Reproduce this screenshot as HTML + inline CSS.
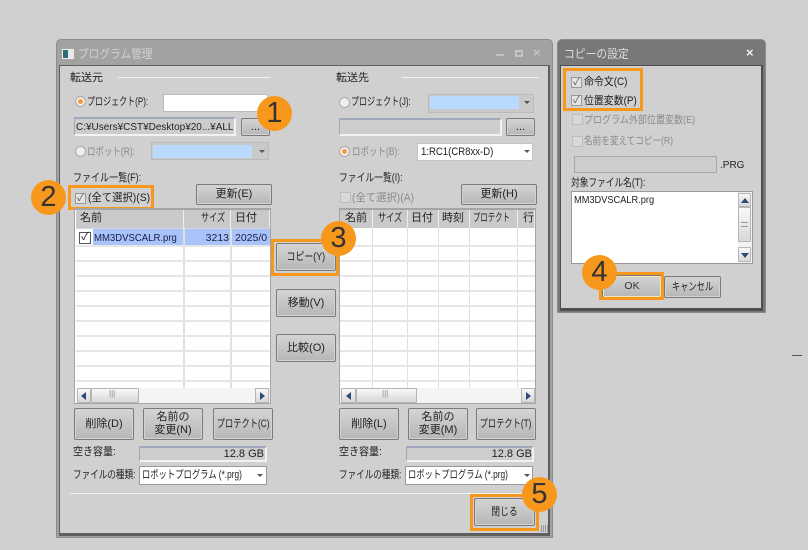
<!DOCTYPE html>
<html><head><meta charset="utf-8"><style>
html,body{margin:0;padding:0;width:808px;height:550px;overflow:hidden;background:#d0d0d0}
body{position:relative;font-family:"Liberation Sans","Noto Sans CJK JP",sans-serif;font-size:11px;color:#222}
div{position:absolute;box-sizing:border-box}
#w{left:0;top:0;width:808px;height:550px;filter:blur(.3px)}
.t{white-space:nowrap;line-height:14px;height:14px;transform-origin:left center}
.g{color:#8a8a8a}
.b{background:linear-gradient(#d4d4d4,#b6b6b6);border:1px solid #7b7b7b;border-radius:2px;text-align:center;display:flex;align-items:center;justify-content:center;line-height:13px;box-shadow:inset 0 0 0 1px #d2d2d2;white-space:nowrap}
.b span{display:inline-block}
.f{background:#cdcdcd;border:1px solid;border-color:#a2a8bb #f2f2f2 #f2f2f2 #a2a8bb;border-width:2px 2px 2px 1px}
.c{background:#fff;border:1px solid #aaa}
.cd{background:#c9c9c9;border:1px solid #bbb}
.blue{background:#b9d9ff}
.ar{width:0;height:0;border-left:3px solid transparent;border-right:3px solid transparent;border-top:3px solid #555}
.r{width:11px;height:11px;border-radius:50%;background:#eee;border:1px solid #aaa}
.r.on{background:#f59a3c;box-shadow:inset 0 0 0 2px #f1f1f1}
.k{width:11px;height:11px;background:#e4e4e4;border:1px solid #999;color:#555;font-size:10px;line-height:9px;text-align:center}
.k.off{background:#d8d8d8;border-color:#bdbdbd}
.o{border:3px solid #f7981d}
.n{width:35px;height:35px;border-radius:50%;background:#f7981d;color:#333;font-size:29px;line-height:35px;text-align:center}
.hl{background:#e6e6e6;height:2px}
.vl{background:#e0e0e0;width:1px}
.th{background:#c9c9c9;border-right:1px solid #eee;height:18px;line-height:17px;top:210px;overflow:hidden}
.sb{background:#f4f4f4;height:15px;top:388px}
.sq{background:linear-gradient(#f8f8f8,#d8d8d8);border:1px solid #b5b5b5;top:388px;height:15px;border-radius:1px}
.l{width:0;height:0;border-top:4px solid transparent;border-bottom:4px solid transparent;border-right:5px solid #2d4a78;top:392px}
.rr{width:0;height:0;border-top:4px solid transparent;border-bottom:4px solid transparent;border-left:5px solid #2d4a78;top:392px}
</style></head><body><div id="w">

<!-- main window -->
<div style="left:56px;top:39px;width:497px;height:499px;background:#a2a2a2;border:1px solid #8c8c8c;border-radius:5px 5px 0 0"></div>
<div style="left:59px;top:65px;width:491px;height:471px;background:#d0d0d0;border:1px solid #5e5e5e;border-bottom-width:3px;border-right-width:2px"></div>
<div style="left:62px;top:49px;width:12px;height:10px;background:linear-gradient(90deg,#2c6e78 50%,#e8e8e8 50%);border:1px solid #eee"></div>
<div class="t" style="left:78px;top:46px;font-size:12px;color:#d2d2d2;line-height:16px;height:16px;transform:scaleX(.89)">プログラム管理</div>
<div style="left:496px;top:54px;width:8px;height:2px;background:#c4c4c4"></div>
<div style="left:515px;top:50px;width:8px;height:7px;border:2px solid #c4c4c4"></div>
<div class="t" style="left:533px;top:46px;font-size:13px;color:#c4c4c4;font-weight:bold">×</div>

<!-- left -->
<div class="t" style="left:70px;top:71px">転送元</div>
<div style="left:118px;top:77px;width:152px;height:1px;background:#f2f2f2"></div>
<div class="r on" style="left:75px;top:96px"></div>
<div class="t" style="left:87px;top:95px;transform:scaleX(.73)">プロジェクト(P):</div>
<div class="c" style="left:163px;top:94px;width:105px;height:18px;border-color:#bbb"></div>
<div class="f" style="left:74px;top:117px;width:162px;height:19px"></div>
<div class="t" style="left:76px;top:120px;font-size:10.5px;transform:scaleX(.95)">C:¥Users¥CST¥Desktop¥20...¥ALL</div>
<div class="b" style="left:241px;top:118px;width:29px;height:18px">...</div>
<div class="r" style="left:75px;top:146px"></div>
<div class="t g" style="left:87px;top:145px;transform:scaleX(.77)">ロボット(R):</div>
<div class="cd" style="left:151px;top:142px;width:118px;height:18px"></div>
<div class="blue" style="left:153px;top:145px;width:99px;height:13px"></div>
<div class="ar" style="left:259px;top:150px"></div>
<div class="t" style="left:73px;top:171px;transform:scaleX(.82)">ファイル一覧(F):</div>
<div class="b" style="left:196px;top:184px;width:76px;height:21px">更新(E)</div>
<div class="o" style="left:68px;top:185px;width:86px;height:25px"></div>
<div class="k" style="left:75px;top:193px">✓</div>
<div class="t" style="left:88px;top:191px;transform:scaleX(.94)">(全て選択)(S)</div>

<!-- left table -->
<div style="left:74px;top:208px;width:197px;height:196px;background:#fff;border:1px solid #a5a5a5;border-width:2px 1px 1px 1px;overflow:hidden"></div>
<div class="th" style="left:76px;width:108px"></div>
<div class="th" style="left:184px;width:47px"></div>
<div class="th" style="left:231px;width:39px"></div>
<div class="t" style="left:80px;top:211px">名前</div>
<div class="t" style="left:201px;top:211px;transform:scaleX(.74)">サイズ</div>
<div class="t" style="left:235px;top:211px">日付</div>
<div style="left:93px;top:228px;width:177px;height:17px;background:#a9c4fb"></div>
<div style="left:76px;top:228px;width:194px;height:1px;background:#cfd6e8"></div>
<div style="left:79px;top:232px;width:12px;height:12px;background:#fff;border:1px solid #555;font-size:11px;line-height:9px;text-align:center">✓</div>
<div class="t" style="left:94px;top:231px;color:#1c1c44;font-size:10.5px;transform:scaleX(.91)">MM3DVSCALR.prg</div>
<div class="t" style="left:184px;top:231px;width:45px;text-align:right;color:#1c1c44;font-size:10.5px">3213</div>
<div class="t" style="left:235px;top:231px;width:35px;overflow:hidden;color:#1c1c44;font-size:10.5px">2025/0</div>
<div class="vl" style="left:183px;top:228px;height:160px;width:2px"></div>
<div class="vl" style="left:230px;top:228px;height:160px;width:2px"></div>
<div class="hl" style="left:76px;top:245px;width:194px"></div>
<div class="hl" style="left:76px;top:260px;width:194px"></div>
<div class="hl" style="left:76px;top:275px;width:194px"></div>
<div class="hl" style="left:76px;top:290px;width:194px"></div>
<div class="hl" style="left:76px;top:305px;width:194px"></div>
<div class="hl" style="left:76px;top:320px;width:194px"></div>
<div class="hl" style="left:76px;top:335px;width:194px"></div>
<div class="hl" style="left:76px;top:350px;width:194px"></div>
<div class="hl" style="left:76px;top:365px;width:194px"></div>
<div class="hl" style="left:76px;top:380px;width:194px"></div>
<div class="sb" style="left:76px;width:194px"></div>
<div class="sq" style="left:77px;width:14px"></div><div class="l" style="left:81px"></div>
<div class="sq" style="left:91px;width:48px"></div>
<div class="t" style="left:109px;top:388px;font-size:8px;color:#888;line-height:12px">|||</div>
<div class="sq" style="left:255px;width:14px"></div><div class="rr" style="left:260px"></div>

<div class="b" style="left:74px;top:408px;width:60px;height:32px">削除(D)</div>
<div class="b" style="left:143px;top:408px;width:60px;height:32px">名前の<br>変更(N)</div>
<div class="b" style="left:213px;top:408px;width:60px;height:32px"><span style="transform:scaleX(.75)">プロテクト(C)</span></div>
<div class="t" style="left:73px;top:445px;transform:scaleX(.91)">空き容量:</div>
<div class="f" style="left:139px;top:446px;width:128px;height:16px"></div>
<div class="t" style="left:139px;top:447px;width:125px;text-align:right">12.8 GB</div>
<div class="t" style="left:73px;top:468px;transform:scaleX(.78)">ファイルの種類:</div>
<div class="c" style="left:139px;top:466px;width:128px;height:19px;border-color:#999"></div>
<div class="t" style="left:142px;top:468px;transform:scaleX(.755)">ロボットプログラム (*.prg)</div>
<div class="ar" style="left:257px;top:474px"></div>
<div style="left:70px;top:493px;width:471px;height:1px;background:#f0f0f0"></div>

<!-- center -->
<div class="b" style="left:276px;top:243px;width:60px;height:28px"><span style="transform:scaleX(.81)">コピー(Y)</span></div>
<div class="o" style="left:271px;top:239px;width:68px;height:37px"></div>
<div class="b" style="left:276px;top:289px;width:60px;height:28px">移動(V)</div>
<div class="b" style="left:276px;top:334px;width:60px;height:28px">比較(O)</div>

<!-- right -->
<div class="t" style="left:336px;top:71px">転送先</div>
<div style="left:402px;top:77px;width:137px;height:1px;background:#f2f2f2"></div>
<div class="r" style="left:339px;top:97px"></div>
<div class="t" style="left:351px;top:95px;transform:scaleX(.73)">プロジェクト(J):</div>
<div class="cd" style="left:428px;top:94px;width:106px;height:19px"></div>
<div class="blue" style="left:430px;top:96px;width:89px;height:13px"></div>
<div class="ar" style="left:524px;top:101px"></div>
<div class="f" style="left:339px;top:118px;width:163px;height:18px"></div>
<div class="b" style="left:506px;top:118px;width:29px;height:18px">...</div>
<div class="r on" style="left:339px;top:146px"></div>
<div class="t g" style="left:352px;top:145px;transform:scaleX(.77)">ロボット(B):</div>
<div class="c" style="left:417px;top:143px;width:116px;height:18px;border-color:#c4c4c4"></div>
<div class="t" style="left:421px;top:145px;transform:scaleX(.87)">1:RC1(CR8xx-D)</div>
<div class="ar" style="left:524px;top:150px"></div>
<div class="t" style="left:339px;top:171px;transform:scaleX(.8)">ファイル一覧(I):</div>
<div class="k off" style="left:340px;top:192px"></div>
<div class="t g" style="left:352px;top:191px;transform:scaleX(.94)">(全て選択)(A)</div>
<div class="b" style="left:461px;top:184px;width:76px;height:21px">更新(H)</div>

<!-- right table -->
<div style="left:339px;top:208px;width:197px;height:196px;background:#fff;border:1px solid #a5a5a5;border-width:2px 1px 1px 1px"></div>
<div class="th" style="left:340px;width:33px"></div>
<div class="th" style="left:373px;width:35px"></div>
<div class="th" style="left:408px;width:31px"></div>
<div class="th" style="left:439px;width:31px"></div>
<div class="th" style="left:470px;width:48px"></div>
<div class="th" style="left:518px;width:17px"></div>
<div class="t" style="left:345px;top:211px">名前</div>
<div class="t" style="left:378px;top:211px;transform:scaleX(.74)">サイズ</div>
<div class="t" style="left:411px;top:211px">日付</div>
<div class="t" style="left:442px;top:211px">時刻</div>
<div class="t" style="left:473px;top:211px;transform:scaleX(.67)">プロテクト</div>
<div class="t" style="left:523px;top:211px">行</div>
<div class="vl" style="left:372px;top:228px;height:160px"></div>
<div class="vl" style="left:407px;top:228px;height:160px"></div>
<div class="vl" style="left:438px;top:228px;height:160px"></div>
<div class="vl" style="left:469px;top:228px;height:160px"></div>
<div class="vl" style="left:517px;top:228px;height:160px"></div>
<div class="hl" style="left:340px;top:245px;width:195px"></div>
<div class="hl" style="left:340px;top:260px;width:195px"></div>
<div class="hl" style="left:340px;top:275px;width:195px"></div>
<div class="hl" style="left:340px;top:290px;width:195px"></div>
<div class="hl" style="left:340px;top:305px;width:195px"></div>
<div class="hl" style="left:340px;top:320px;width:195px"></div>
<div class="hl" style="left:340px;top:335px;width:195px"></div>
<div class="hl" style="left:340px;top:350px;width:195px"></div>
<div class="hl" style="left:340px;top:365px;width:195px"></div>
<div class="hl" style="left:340px;top:380px;width:195px"></div>
<div class="sb" style="left:340px;width:195px"></div>
<div class="sq" style="left:341px;width:15px"></div><div class="l" style="left:346px"></div>
<div class="sq" style="left:356px;width:61px"></div>
<div class="t" style="left:382px;top:388px;font-size:8px;color:#888;line-height:12px">|||</div>
<div class="sq" style="left:521px;width:14px"></div><div class="rr" style="left:526px"></div>

<div class="b" style="left:339px;top:408px;width:60px;height:32px">削除(L)</div>
<div class="b" style="left:408px;top:408px;width:60px;height:32px">名前の<br>変更(M)</div>
<div class="b" style="left:476px;top:408px;width:60px;height:32px"><span style="transform:scaleX(.75)">プロテクト(T)</span></div>
<div class="t" style="left:339px;top:445px;transform:scaleX(.91)">空き容量:</div>
<div class="f" style="left:406px;top:446px;width:128px;height:16px"></div>
<div class="t" style="left:406px;top:447px;width:126px;text-align:right">12.8 GB</div>
<div class="t" style="left:339px;top:468px;transform:scaleX(.78)">ファイルの種類:</div>
<div class="c" style="left:405px;top:466px;width:128px;height:19px;border-color:#999"></div>
<div class="t" style="left:408px;top:468px;transform:scaleX(.755)">ロボットプログラム (*.prg)</div>
<div class="ar" style="left:524px;top:474px"></div>
<div class="b" style="left:474px;top:498px;width:61px;height:28px"><span style="transform:scaleX(.8)">閉じる</span></div>
<div class="o" style="left:470px;top:494px;width:69px;height:37px"></div>
<div style="left:541px;top:525px;width:7px;height:7px;background:repeating-linear-gradient(90deg,#999 0 1px,transparent 1px 2px)"></div>

<!-- dialog -->
<div style="left:557px;top:39px;width:209px;height:274px;background:#787878;border:1px solid #8a8a8a;border-radius:5px 5px 0 0"></div>
<div style="left:560px;top:65px;width:203px;height:246px;background:#d0d0d0;border:1px solid #4e4e4e;border-bottom-width:3px;border-right-width:2px"></div>
<div class="t" style="left:564px;top:46px;font-size:12px;color:#dcdcdc;line-height:16px;height:16px;transform:scaleX(.9)">コピーの設定</div>
<div class="t" style="left:746px;top:46px;font-size:13px;color:#f0f0f0;font-weight:bold">×</div>
<div class="o" style="left:563px;top:68px;width:80px;height:43px"></div>
<div class="k" style="left:571px;top:77px">✓</div>
<div class="t" style="left:584px;top:75px;color:#1c1c1c;transform:scaleX(.9)">命令文(C)</div>
<div class="k" style="left:571px;top:95px">✓</div>
<div class="t" style="left:584px;top:94px;color:#1c1c1c;transform:scaleX(.9)">位置変数(P)</div>
<div class="k off" style="left:572px;top:114px"></div>
<div class="t g" style="left:584px;top:113px;font-size:10.5px;transform:scaleX(.86)">プログラム外部位置変数(E)</div>
<div class="k off" style="left:572px;top:136px"></div>
<div class="t g" style="left:584px;top:134px;font-size:10.5px;transform:scaleX(.82)">名前を変えてコピー(R)</div>
<div style="left:574px;top:156px;width:143px;height:17px;background:#cdcdcd;border:1px solid #a8a8a8"></div>
<div class="t" style="left:720px;top:159px;font-size:10px">.PRG</div>
<div class="t" style="left:571px;top:176px;transform:scaleX(.79)">対象ファイル名(T):</div>
<div style="left:571px;top:191px;width:182px;height:73px;background:#fff;border:1px solid #999"></div>
<div class="t" style="left:574px;top:193px;font-size:10.5px;transform:scaleX(.88)">MM3DVSCALR.prg</div>
<div style="left:738px;top:192px;width:14px;height:71px;background:#f2f2f2"></div>
<div class="sq" style="left:738px;top:193px;width:13px;height:14px"></div>
<div style="left:741px;top:198px;width:0;height:0;border-left:4px solid transparent;border-right:4px solid transparent;border-bottom:5px solid #2d4a78"></div>
<div class="sq" style="left:738px;top:207px;width:13px;height:35px"></div>
<div style="left:741px;top:222px;width:7px;height:5px;border-top:1px solid #999;border-bottom:1px solid #999"></div>
<div class="sq" style="left:738px;top:247px;width:13px;height:15px"></div>
<div style="left:741px;top:253px;width:0;height:0;border-left:4px solid transparent;border-right:4px solid transparent;border-top:5px solid #2d4a78"></div>
<div class="b" style="left:602px;top:275px;width:60px;height:23px;font-size:10.5px;color:#333;box-shadow:inset 0 0 0 1px #efe7b8">OK</div>
<div class="o" style="left:599px;top:272px;width:65px;height:28px"></div>
<div class="b" style="left:664px;top:276px;width:57px;height:22px"><span style="transform:scaleX(.75)">キャンセル</span></div>

<div style="left:792px;top:355px;width:10px;height:1px;background:#555"></div>

<!-- numbers -->
<div class="n" style="left:257px;top:96px">1</div>
<div class="n" style="left:31px;top:180px">2</div>
<div class="n" style="left:321px;top:221px">3</div>
<div class="n" style="left:582px;top:255px">4</div>
<div class="n" style="left:522px;top:477px">5</div>
</div></body></html>
